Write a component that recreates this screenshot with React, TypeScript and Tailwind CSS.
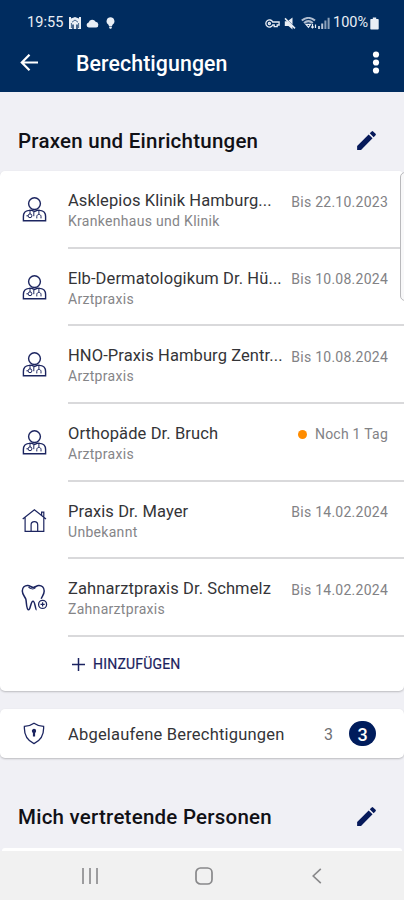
import React from 'react';

type IconName = 'doctor' | 'house' | 'tooth';

interface Permission {
  name: string;
  type: string;
  until: string;
  icon: IconName;
  warning?: boolean;
}

const permissions: Permission[] = [
  { name: 'Asklepios Klinik Hamburg...', type: 'Krankenhaus und Klinik', until: 'Bis 22.10.2023', icon: 'doctor' },
  { name: 'Elb-Dermatologikum Dr. Hü...', type: 'Arztpraxis', until: 'Bis 10.08.2024', icon: 'doctor' },
  { name: 'HNO-Praxis Hamburg Zentr...', type: 'Arztpraxis', until: 'Bis 10.08.2024', icon: 'doctor' },
  { name: 'Orthopäde Dr. Bruch', type: 'Arztpraxis', until: 'Noch 1 Tag', icon: 'doctor', warning: true },
  { name: 'Praxis Dr. Mayer', type: 'Unbekannt', until: 'Bis 14.02.2024', icon: 'house' },
  { name: 'Zahnarztpraxis Dr. Schmelz', type: 'Zahnarztpraxis', until: 'Bis 14.02.2024', icon: 'tooth' },
];

function DoctorIcon() {
  return (
    <svg width="26" height="28" viewBox="0 0 26 28" fill="none" stroke="#1c2560" strokeWidth="1.4">
      <circle cx="13.5" cy="7.6" r="5.9" />
      <path d="M2.4 24.7v-4.2c0-3.800 2.200-5.800 5.600-6.100l2.200-.3 3.300 1.300 3.300-1.300 2.200.3c3.400.3 5.600 2.300 5.600 6.100v4.200z" />
      <circle cx="9" cy="19.800" r="1.900" strokeWidth="1" />
      <path d="M5.400 19.800h1.700M9 15v3M12.800 16v4.200M15.800 22.400v-2c0-2.600 4.200-2.600 4.200 0v2M17.900 18.300v-3.500" strokeWidth="1" />
    </svg>
  );
}

function HouseIcon() {
  return (
    <svg width="26" height="28" viewBox="0 0 26 28" fill="none" stroke="#1c2560" strokeWidth="1.2">
      <path d="M1.700 12 13.400 2.800 25 12M4.100 10.600v13.700h18.700V10.600M20.600 8.300V5.200h2.200v4.600" />
      <path d="M10.100 24v-6.200c0-4.200 6.600-4.200 6.600 0V24" />
    </svg>
  );
}

function ToothIcon() {
  return (
    <svg className="ml-[2px]" width="28" height="28" viewBox="0 0 28 28" fill="none" stroke="#1c2560" strokeWidth="1.5" strokeLinejoin="round">
      <path d="M15.600 25.800c-1.500 0-1.300-8.600-3.600-8.600s-2.600 8.600-4.300 8.600c-2.600 0-2-7.800-2.900-10.800C3.800 12.500 1.300 10.500 1.300 7.100c0-3.800 2.500-5.800 5.500-5.600 2.400.2 3.300 1.900 5.400 1.900s3.200-1.700 5.500-1.900c3-.2 5.500 1.800 5.500 5.600 0 3.400-2.100 5.200-3 7.600" />
      <path d="M7.500 3c2 2 5 2.600 7 .6" strokeWidth="1.100" />
      <circle cx="21.600" cy="20.400" r="4" strokeWidth="1.300" />
      <path d="M21.600 18.300v4.200M19.500 20.400h4.200" strokeWidth="1.200" />
    </svg>
  );
}

function RowIcon({ name }: { name: IconName }) {
  if (name === 'house') return <HouseIcon />;
  if (name === 'tooth') return <ToothIcon />;
  return <DoctorIcon />;
}

function EditIcon() {
  return (
    <svg width="25" height="25" viewBox="0 0 24 24" fill="#06195a">
      <path d="M3 17.250V21h3.750L17.810 9.940l-3.750-3.750L3 17.250zM20.710 7.040a1 1 0 0 0 0-1.410l-2.340-2.340a1 1 0 0 0-1.410 0l-1.830 1.830 3.750 3.750 1.830-1.830z" />
    </svg>
  );
}

function StatusBar() {
  return (
    <div className="flex h-[46px] items-center justify-between pl-[27px] pr-[25px] text-[#e9eef5]">
      <div className="flex items-center">
        <span className="w-[37px] text-[14.5px] tracking-[0.1px]">19:55</span>
        <svg className="ml-[5px]" width="12" height="12" viewBox="0 0 12 12">
          <path d="M0 0h2v1.500L6 0l4 1.500V0h2v12H8.700V7.500H7.300V12H4.700V7.500H3.300V12H0z" fill="currentColor" />
          <path d="M3 5.200 6 3l3 2.200M2.400 6v5M9.600 6v5" fill="none" stroke="#002c5f" strokeWidth=".7" />
        </svg>
        <svg className="ml-[5px]" width="13" height="9" viewBox="0 0 13 9" fill="currentColor">
          <path d="M2.800 8.500a2.600 2.600 0 0 1-.2-5.100A3.800 3.800 0 0 1 9.600 2.800a2.900 2.900 0 0 1 .6 5.700z" />
        </svg>
        <svg className="ml-[7px]" width="9" height="12" viewBox="0 0 9 12" fill="currentColor">
          <path d="M4.500.3a4 4 0 0 1 2.200 7.300L6 9H3l-.7-1.400A4 4 0 0 1 4.500.3zM3.200 9.500h2.600V11l-.8.800H4l-.8-.8z" />
        </svg>
      </div>
      <div className="flex items-center">
        <svg width="15" height="9" viewBox="0 0 15 9" fill="none" stroke="currentColor" strokeWidth="1.3">
          <path d="M7.700 3A3.600 3.600 0 1 0 7.700 6h1.500v1.700h3V6h1.900V3z" />
          <circle cx="4.400" cy="4.500" r="1" />
        </svg>
        <svg className="ml-1" width="12" height="13" viewBox="0 0 12 13" fill="currentColor">
          <path d="M.8 4.200h2.400L8.500 9v3.500L4.500 9H.8zM4.500 3.600 8.500.6v6.800z" />
          <path d="m1 1.400 10 10" stroke="currentColor" strokeWidth="1.500" />
        </svg>
        <svg className="ml-[5px]" width="16" height="12" viewBox="0 0 16 12" fill="none" stroke="currentColor">
          <path d="M.8 3.600c4-3.600 9.200-3.600 13.200 0M3 6c2.700-2.300 6.100-2.300 8.800 0" strokeWidth="2" opacity=".75" />
          <path d="m5 7.300 2.500 3 2-3zM11.500 7v4m-1.300-1.300 1.300 1.300 1.300-1.300M14.500 11V7.500" strokeWidth="1.2" />
        </svg>
        <svg className="ml-[1px]" width="12" height="12" viewBox="0 0 12 12" fill="currentColor">
          <path d="M0 9h2v3H0zM3.200 6.500h2V12h-2z" opacity=".8" />
          <path d="M6.400 3.500h2V12h-2zM9.600.8h2V12h-2z" opacity=".6" />
        </svg>
        <span className="ml-[3px] w-[37px] whitespace-nowrap text-[14.5px]">100%</span>
        <svg width="9" height="13" viewBox="0 0 9 13" fill="currentColor">
          <path d="M2.800.5h3.400V2H8a.7.7 0 0 1 .7.7v9a.7.7 0 0 1-.7.7H1a.7.7 0 0 1-.7-.7v-9A.7.7 0 0 1 1 2h1.800z" />
        </svg>
      </div>
    </div>
  );
}

function SectionHeader({ title }: { title: string }) {
  return (
    <div className="flex items-center justify-between pl-[18px] pr-[25px]">
      <h2 className="pt-0.5 text-[20.5px] font-medium leading-6 tracking-[0.24px] text-[#111116]">{title}</h2>
      <EditIcon />
    </div>
  );
}

function PermissionRow({ item }: { item: Permission }) {
  return (
    <li className="flex h-[77.67px]">
      <div className="flex w-[68px] justify-center pt-[25px]">
        <RowIcon name={item.icon} />
      </div>
      <div className="flex flex-1 justify-between border-b-2 border-[#d9d9db] pr-4 pt-[19px]">
        <div className="whitespace-nowrap">
          <p className="text-[16.5px] leading-[21px] tracking-[0.1px] text-[#343437]">{item.name}</p>
          <p className="text-[14px] leading-[21px] tracking-[0.3px] text-[#858588]">{item.type}</p>
        </div>
        <div className="flex h-[24px] items-center whitespace-nowrap text-[14px] tracking-[0.25px] text-[#828285]">
          {item.warning && <span className="mr-2 size-[9px] rounded-full bg-[#ff8c00]" />}
          {item.until}
        </div>
      </div>
    </li>
  );
}

export default function App() {
  return (
    <div className="relative flex h-[900px] w-[404px] flex-col overflow-hidden bg-[#f0f0f5] font-['Roboto',sans-serif]">
      <header className="h-[92px] shrink-0 bg-[#002c5f] text-white">
        <StatusBar />
        <div className="flex h-[34px] items-center pl-[20px] pr-[24px]">
          <svg width="19" height="18" viewBox="0 0 19 18" fill="none" stroke="currentColor" strokeWidth="2.2">
            <path d="M18 8.500H2.500M9.500.7 1.800 8.500l7.700 7.800" />
          </svg>
          <h1 className="ml-[37px] flex-1 pt-[2px] text-[21.3px] font-medium tracking-[0.1px]">Berechtigungen</h1>
          <svg width="8" height="24" viewBox="0 0 8 24" fill="currentColor">
            <circle cx="4" cy="3.500" r="3.100" />
            <circle cx="4" cy="11.500" r="3.100" />
            <circle cx="4" cy="19.500" r="3.100" />
          </svg>
        </div>
      </header>

      <main className="flex flex-1 flex-col">
        <div className="flex h-[79px] flex-col justify-end pb-[18px]">
          <SectionHeader title="Praxen und Einrichtungen" />
        </div>

        <section className="h-[520px] rounded-[5px] bg-white shadow-[0_1px_2px_rgba(0,0,0,0.22)]">
          <ul>
            {permissions.map((item) => (
              <PermissionRow key={item.name} item={item} />
            ))}
          </ul>
          <button className="ml-[72px] flex h-[56px] items-center text-[14px] tracking-[0.2px] text-[#1b2360] [-webkit-text-stroke:0.2px]">
            <svg className="mr-2" width="13" height="13" viewBox="0 0 13 13" stroke="currentColor" strokeWidth="1.5">
              <path d="M6.500 0v13M0 6.500h13" />
            </svg>
            HINZUFÜGEN
          </button>
        </section>

        <section className="mt-[18px] flex h-[49px] shrink-0 items-center rounded-[5px] bg-white pr-[28px] shadow-[0_1px_2px_rgba(0,0,0,0.22)]">
          <div className="flex w-[68px] justify-center">
            <svg width="22" height="23" viewBox="0 0 22 23" fill="none" stroke="#1c2560" strokeWidth="1.3">
              <path d="M11 1.200c3 2.200 6 3 9.600 3.100.5 8-2.100 14-9.600 17.300C3.500 18.300.9 12.300 1.400 4.300 5 4.200 8 3.400 11 1.200z" />
              <circle cx="11" cy="9" r="1.500" fill="#1c2560" />
              <path d="M11 9v5.500" strokeWidth="2.200" />
            </svg>
          </div>
          <span className="flex-1 pt-[3px] text-[16.5px] tracking-[0.2px] text-[#343437]">Abgelaufene Berechtigungen</span>
          <span className="mr-4 pt-[2px] text-[16px] text-[#707074]">3</span>
          <span className="flex h-[25px] w-[27px] items-center justify-center rounded-full bg-[#001c5c] pt-px text-[18px] font-medium text-white">3</span>
        </section>

        <div className="mt-[45px]">
          <SectionHeader title="Mich vertretende Personen" />
        </div>
      </main>

      <div className="mx-[2px] h-[3px] shrink-0 rounded-t bg-white" />
      <nav className="flex h-[49px] shrink-0 items-center bg-[#f1f1f1] pl-[82px] text-[#88888a]">
        <svg width="16" height="16" viewBox="0 0 16 16" stroke="currentColor" strokeWidth="1.6">
          <path d="M1 0v16M8 0v16M15 0v16" />
        </svg>
        <svg className="ml-[97px]" width="18" height="18" viewBox="0 0 18 18" fill="none" stroke="currentColor" strokeWidth="1.7">
          <rect x="1" y="1" width="16" height="16" rx="4.500" />
        </svg>
        <svg className="ml-[99px]" width="10" height="16" viewBox="0 0 10 16" fill="none" stroke="currentColor" strokeWidth="1.6">
          <path d="M8.800.8 1.200 8l7.600 7.200" />
        </svg>
      </nav>

      {/* edge panel handle */}
      <div className="absolute right-[-4px] top-[172px] h-[129px] w-[8px] rounded-l-[5px] border border-[#b9b9bc] bg-[#f8f8f9]" />
    </div>
  );
}
